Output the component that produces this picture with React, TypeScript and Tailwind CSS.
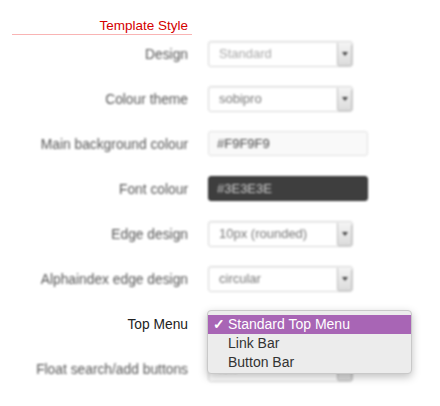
import React from 'react';

// --- Select box look-alike (native-ish with small arrow button on the right) ---
const FakeSelect: React.FC<{ value: string; muted?: boolean }> = ({ value, muted }) => (
    <div className="w-[145px] h-[26px] flex items-stretch bg-white border border-[#d6d6d6] rounded-[3px] shadow-[inset_0_1px_2px_rgba(0,0,0,0.06)]">
        <span className={`flex-1 flex items-center pl-[10px] text-[13px] ${muted ? 'text-[#a8a8a8]' : 'text-[#777]'}`}>{value}</span>
        <span className="w-[14px] my-[1px] mr-[1px] flex items-center justify-center bg-gradient-to-b from-[#f4f4f4] to-[#dcdcdc] border-l border-[#bdbdbd] rounded-r-[2px] shadow-[1px_1px_1px_rgba(0,0,0,0.25)]">
            <span className="w-0 h-0 border-l-[3px] border-r-[3px] border-t-[4px] border-l-transparent border-r-transparent border-t-[#444]" />
        </span>
    </div>
);

const TextInput: React.FC<{ value: string; dark?: boolean }> = ({ value, dark }) => (
    <div
        className={`w-[160px] h-[25px] flex items-center pl-[8px] text-[13px] rounded-[3px] ${
            dark ? 'bg-[#3e3e3e] text-[#d0d0d0] border border-[#2e2e2e]' : 'bg-[#f9f9f9] text-[#444] border border-[#e0e0e0]'
        }`}
    >
        {value}
    </div>
);

// --- Row: label right aligned, control beside it ---
const Row: React.FC<{ label: string; sharp?: boolean; children: React.ReactNode }> = ({ label, sharp, children }) => (
    <div className="h-[45px] flex items-center">
        <div className={`w-[188px] pt-[3px] text-right text-[13.8px] ${sharp ? 'text-[#222]' : 'text-[#555] blur-[1.2px]'}`}>{label}</div>
        <div className="ml-[20px] relative">{children}</div>
    </div>
);

const menuItems = ['Standard Top Menu', 'Link Bar', 'Button Bar'];

export default function App() {
    return (
        <div className="w-[440px] h-[406px] bg-white overflow-hidden font-['Liberation_Sans',Arial,sans-serif]">
            {/* heading */}
            <div className="ml-[12px] w-[180px] h-[35px] flex items-end justify-end pb-[2px] border-b-[1.5px] border-[#f9b4b4]">
                <span className="text-[13.5px] text-[#d40000] leading-none pr-[4px]">Template Style</span>
            </div>

            <div className="-mt-[4px]">
                <Row label="Design">
                    <div className="blur-[1.2px]"><FakeSelect value="Standard" muted /></div>
                </Row>
                <Row label="Colour theme">
                    <div className="blur-[1.2px]"><FakeSelect value="sobipro" /></div>
                </Row>
                <Row label="Main background colour">
                    <div className="blur-[1.2px]"><TextInput value="#F9F9F9" /></div>
                </Row>
                <Row label="Font colour">
                    <div className="blur-[1.2px]"><TextInput value="#3E3E3E" dark /></div>
                </Row>
                <Row label="Edge design">
                    <div className="blur-[1.2px]"><FakeSelect value="10px (rounded)" /></div>
                </Row>
                <Row label="Alphaindex edge design">
                    <div className="blur-[1.2px]"><FakeSelect value="circular" /></div>
                </Row>
                <Row label="Top Menu" sharp>
                    <div className="w-[145px] h-[26px]" />
                    {/* open dropdown list */}
                    <div className="absolute z-10 left-[-1px] top-[-1px] w-[205px] pt-[4px] pb-[1px] bg-[#ececec] border border-[#c9c9c9] rounded-[4px] shadow-[0_3px_8px_rgba(0,0,0,0.25)]">
                        {menuItems.map((item, i) => (
                            <div
                                key={item}
                                className={`h-[19px] flex items-center text-[14px] ${i === 0 ? 'bg-[#a865b5] text-white' : 'text-[#333]'}`}
                            >
                                <span className="w-[20px] pl-[5px] font-bold">{i === 0 ? '✓' : ''}</span>
                                <span>{item}</span>
                            </div>
                        ))}
                    </div>
                </Row>
                <Row label="Float search/add buttons">
                    <div className="blur-[1.2px]"><FakeSelect value="left" /></div>
                </Row>
            </div>
        </div>
    );
}
